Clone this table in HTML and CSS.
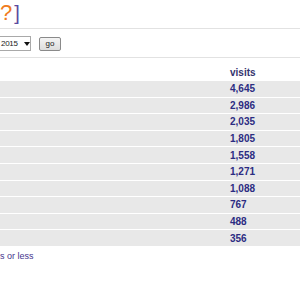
FILE: index.html
```html
<!DOCTYPE html>
<html>
<head>
<meta charset="utf-8">
<link rel="stylesheet" href="styles.css">
</head>
<body>
<div class="title"><span class="q">?</span><span class="br">]</span></div>
<div class="form">
  <div class="select"><span class="val">2015</span><span class="arrow"></span></div>
  <div class="btn">go</div>
</div>
<table class="stats">
  <thead>
    <tr><th class="name"></th><th class="num">visits</th></tr>
  </thead>
  <tbody>
    <tr><td class="name"></td><td class="num">4,645</td></tr>
    <tr><td class="name"></td><td class="num">2,986</td></tr>
    <tr><td class="name"></td><td class="num">2,035</td></tr>
    <tr><td class="name"></td><td class="num">1,805</td></tr>
    <tr><td class="name"></td><td class="num">1,558</td></tr>
    <tr><td class="name"></td><td class="num">1,271</td></tr>
    <tr><td class="name"></td><td class="num">1,088</td></tr>
    <tr><td class="name"></td><td class="num">767</td></tr>
    <tr><td class="name"></td><td class="num">488</td></tr>
    <tr><td class="name"></td><td class="num">356</td></tr>
  </tbody>
</table>
<div class="note">s or less</div>
</body>
</html>
```
FILE: styles.css
```css
html, body {
  margin: 0;
  padding: 0;
  background: #ffffff;
  font-family: "Liberation Sans", Arial, sans-serif;
  overflow: hidden;
}
.title {
  height: 28px;
  border-bottom: 1px solid #e2e2e2;
  font-size: 22px;
  line-height: 25px;
  white-space: nowrap;
}
.title .q {
  color: #f07c1e;
}
.title .br {
  color: #5a4aa0;
  font-size: 20px;
  margin-left: 2px;
}
.form {
  display: flex;
  align-items: center;
  gap: 6px;
  height: 29px;
  border-bottom: 1px solid #e2e2e2;
  padding-top: 1px;
  box-sizing: border-box;
}
.select {
  margin-left: -3px;
  width: 34px;
  height: 15px;
  box-sizing: border-box;
  border: 1px solid #a9a9a9;
  border-left: none;
  background: #fff;
  display: flex;
  align-items: center;
  font-size: 8px;
  padding-left: 4px;
  gap: 6px;
}
.select .val {
  color: #222;
  letter-spacing: -0.3px;
}
.select .arrow {
  width: 0;
  height: 0;
  border-left: 3px solid transparent;
  border-right: 3px solid transparent;
  border-top: 4px solid #111;
}
.btn {
  margin-left: 2px;
  width: 22px;
  height: 14px;
  box-sizing: border-box;
  border: 1px solid #8a8a8a;
  border-radius: 2px;
  background: linear-gradient(#f4f4f4, #dcdcdc);
  font-size: 8px;
  line-height: 12px;
  text-align: center;
  color: #222;
}
.stats {
  width: 100%;
  border-collapse: separate;
  border-spacing: 0 1px;
  margin-top: 6px;
}
.stats th, .stats td {
  padding: 0;
  font-size: 10px;
  font-weight: bold;
  text-align: left;
  color: #2c2c82;
}
.stats th {
  height: 15px;
  line-height: 12px;
  vertical-align: middle;
  color: #34346e;
}
.stats td {
  height: 15.6px;
  line-height: 15px;
  background: #e8e8e8;
}
.stats .name {
  width: 230px;
}
.note {
  margin-top: 4px;
  font-size: 9px;
  color: #46358e;
}
```
